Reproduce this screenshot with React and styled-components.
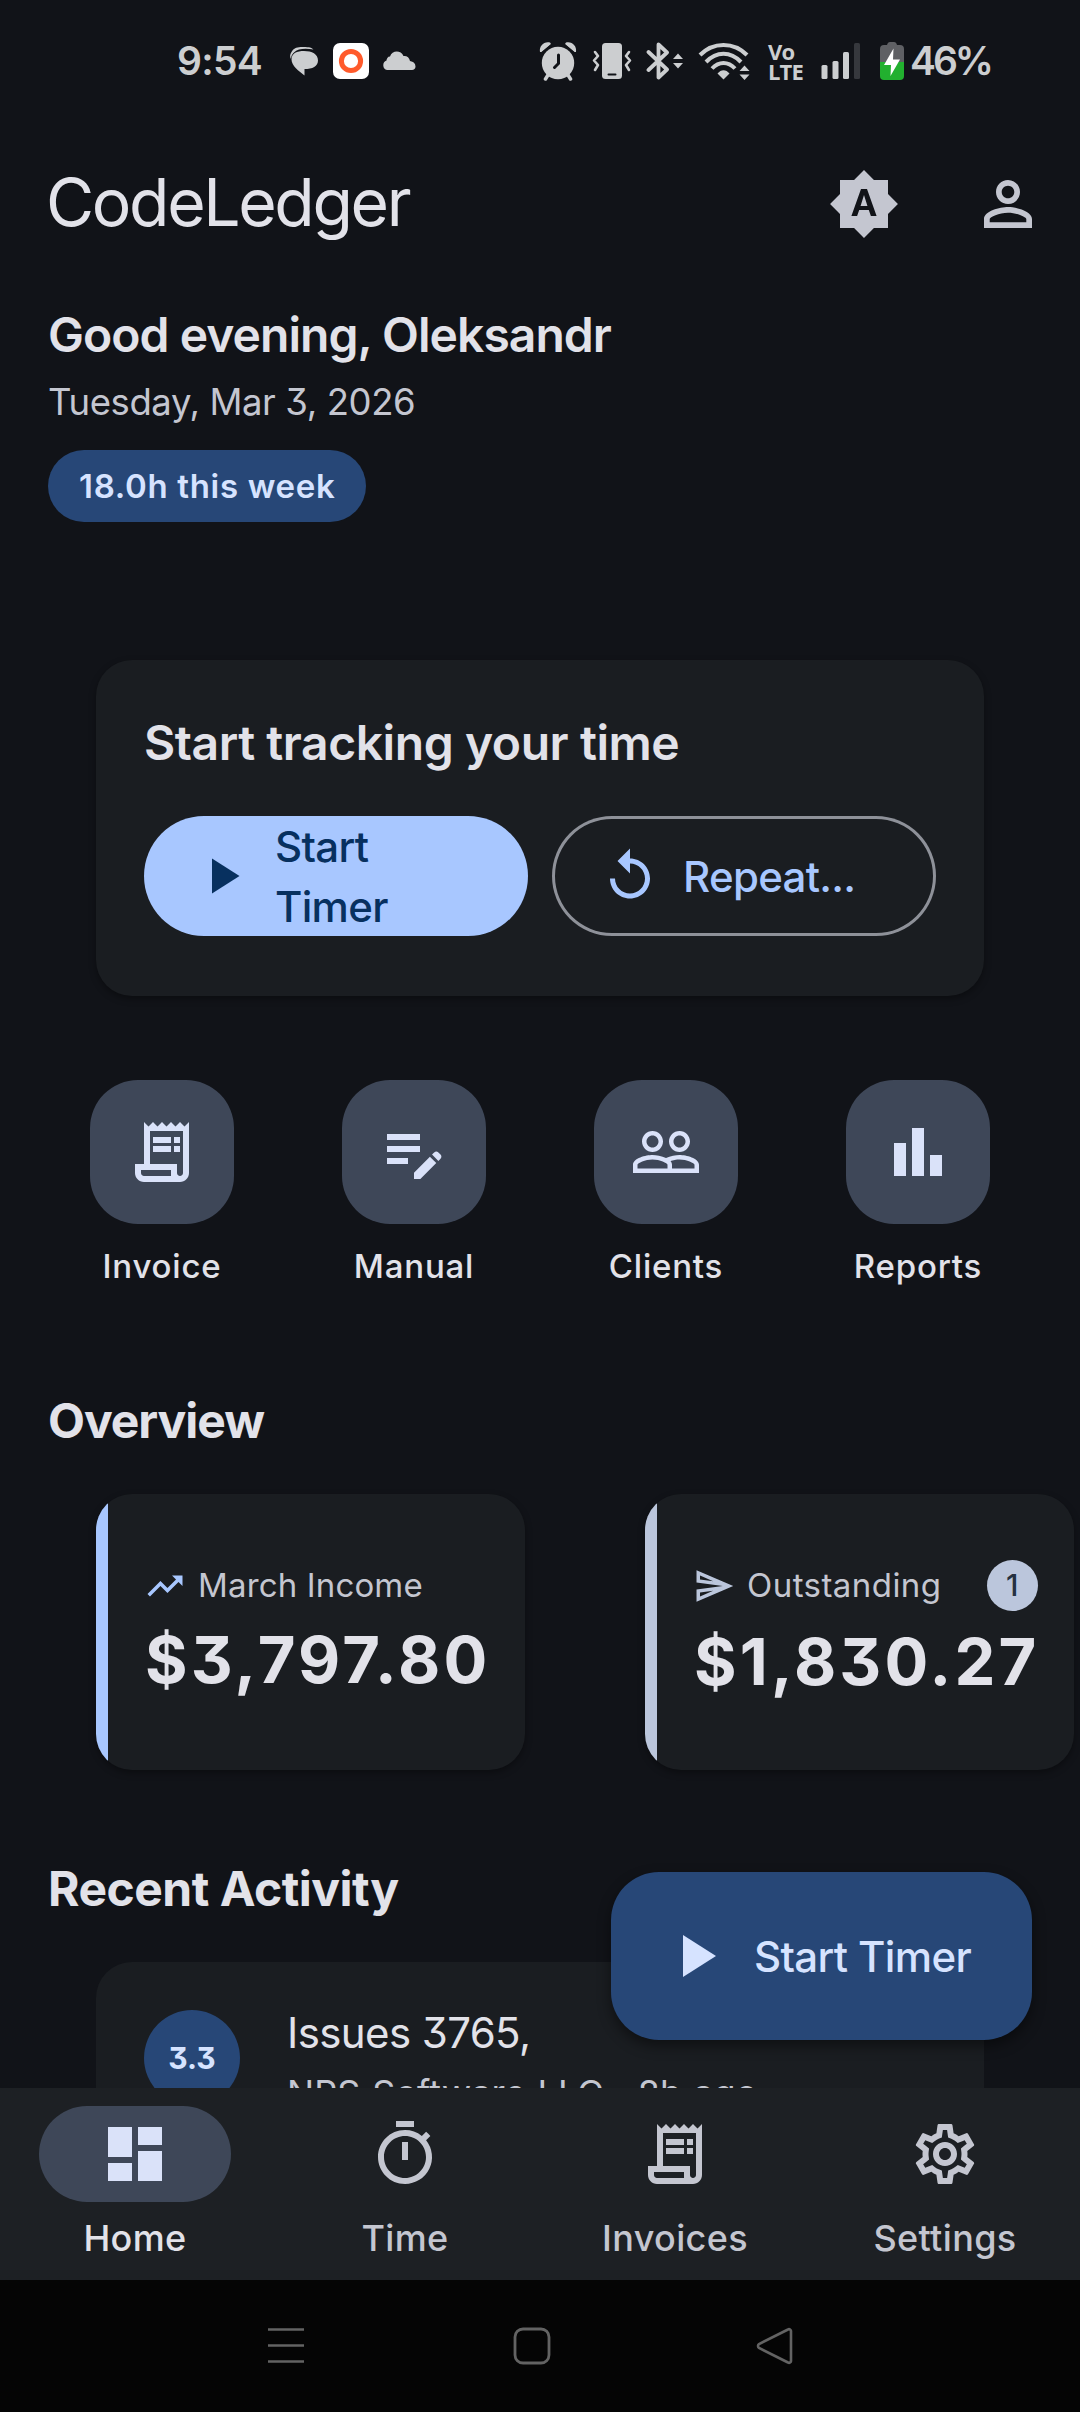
import React from 'react';
import styled, { createGlobalStyle } from 'styled-components';
import {
  MdBrightnessAuto,
  MdOutlineReceiptLong,
  MdEditNote,
  MdOutlineTimer,
  MdOutlineSettings,
} from 'react-icons/md';

const GlobalStyle = createGlobalStyle`
  * {
    box-sizing: border-box;
  }

  body {
    margin: 0;
    background: #111318;
    color: #e2e2e9;
    font-family: Inter, Roboto, sans-serif;
    font-feature-settings: 'cv09' 1;
  }

  svg {
    display: block;
    flex: none;
  }
`;

const Screen = styled.div`
  position: relative;
  display: flex;
  flex-direction: column;
  width: 1080px;
  height: 2412px;
  overflow: hidden;
`;

const Content = styled.main`
  flex: 1;
  min-height: 0;
  overflow: hidden;
`;

/* Status bar */

const StatusBar = styled.header`
  display: flex;
  align-items: center;
  justify-content: space-between;
  height: 122px;
  padding: 0 89px 0 177px;
  color: #ccced0;
`;

const StatusGroup = styled.div`
  display: flex;
  align-items: center;
`;

const StatusText = styled.span`
  margin-left: ${({ $gap }) => $gap || 0}px;
  font-size: 39px;
  font-weight: 600;
  line-height: 48px;
  letter-spacing: ${({ $spacing }) => $spacing}px;
`;

const StatusIcon = styled.svg`
  margin-left: ${({ $gap }) => $gap}px;
`;

const VoLte = styled.span`
  width: 36px;
  margin: 0 -3px 0 16px;
  font-family: 'Open Sans', 'Noto Sans', sans-serif;
  font-size: 22px;
  font-weight: 700;
  line-height: 20px;
  letter-spacing: -0.8px;
`;

/* App bar */

const AppBar = styled.div`
  display: flex;
  align-items: center;
  justify-content: space-between;
  height: 164px;
  padding: 0 36px 0 46px;
`;

const Title = styled.h1`
  margin: 0;
  font-size: 66px;
  font-weight: 400;
  line-height: 84px;
  letter-spacing: -2.35px;
  padding-bottom: 4px;
`;

const AppBarActions = styled.div`
  display: flex;
  gap: 72px;
  color: #c4c6d0;
`;

/* Greeting */

const Greeting = styled.section`
  display: flex;
  flex-direction: column;
  align-items: flex-start;
  padding: 12px 48px 0;
`;

const Hello = styled.h2`
  margin: 0;
  font-size: 48px;
  font-weight: 600;
  line-height: 73px;
  letter-spacing: -0.95px;
`;

const Today = styled.p`
  margin: 4px 0 21px;
  color: #c4c6d0;
  font-size: 36.5px;
  font-weight: 400;
  line-height: 54px;
  letter-spacing: -0.4px;
`;

const Chip = styled.span`
  height: 72px;
  padding: 0 31px;
  border-radius: 36px;
  background: #274777;
  color: #d6e3ff;
  font-size: 33px;
  font-weight: 600;
  line-height: 73px;
  letter-spacing: 0.68px;
`;

/* Timer card */

const TimerCard = styled.section`
  height: 336px;
  margin: 138px 96px 0;
  padding: 48px;
  border-radius: 36px;
  background: #1a1d21;
  box-shadow: 0 3px 7px rgba(0, 0, 0, 0.35);
`;

const CardTitle = styled.h3`
  margin: 0 0 39px;
  font-size: 48px;
  font-weight: 600;
  line-height: 69px;
  letter-spacing: -0.43px;
`;

const ButtonRow = styled.div`
  display: flex;
  gap: 24px;
`;

const Button = styled.button`
  display: flex;
  flex: 1 1 0;
  align-items: center;
  gap: 23px;
  min-width: 0;
  height: 120px;
  padding: 0 48px;
  border: 0;
  border-radius: 60px;
  background: ${({ $outlined }) => ($outlined ? 'transparent' : '#a8c7ff')};
  box-shadow: ${({ $outlined }) => ($outlined ? 'inset 0 0 0 3px #8e9199' : 'none')};
  color: ${({ $outlined }) => ($outlined ? '#a8c7ff' : '#07305f')};
  font: 500 42px/60px Inter, sans-serif;
  letter-spacing: -0.7px;
  text-align: left;
`;

const ButtonLabel = styled.span`
  width: ${({ $width }) => $width || 'auto'};
  padding-top: 2px;
`;

/* Shortcuts */

const Shortcuts = styled.nav`
  display: grid;
  grid-template-columns: repeat(4, 1fr);
  padding: 84px 36px 0;
`;

const Shortcut = styled.div`
  display: flex;
  flex-direction: column;
  align-items: center;
  font-size: 33px;
  font-weight: 500;
  line-height: 49px;
  letter-spacing: 0.8px;
`;

const ShortcutTile = styled.div`
  display: flex;
  align-items: center;
  justify-content: center;
  width: 144px;
  height: 144px;
  margin-bottom: 18px;
  border-radius: 48px;
  background: #3e4758;
  color: #dae2f9;
`;

/* Overview */

const SectionTitle = styled.h2`
  margin: ${({ $top }) => $top}px 0 0;
  padding-left: 48px;
  font-size: 48px;
  font-weight: 700;
  line-height: 72px;
  letter-spacing: ${({ $spacing }) => $spacing}px;
`;

const StatList = styled.div`
  display: flex;
  gap: 120px;
  margin-top: ${({ $top }) => $top}px;
  padding-left: 96px;
`;

const StatCard = styled.article`
  display: flex;
  flex: none;
  width: 429px;
  height: 276px;
  overflow: hidden;
  border-radius: 36px;
  background: #1a1d21;
  box-shadow: 0 3px 7px rgba(0, 0, 0, 0.35);
`;

const Accent = styled.div`
  width: 12px;
  background: ${({ $color }) => $color};
`;

const StatBody = styled.div`
  flex: 1;
  min-width: 0;
  padding: 66px 36px 0;
`;

const StatHead = styled.div`
  display: flex;
  align-items: center;
  height: 51px;
  color: #c4c6d0;
  font-size: 33px;
  line-height: 51px;
  letter-spacing: ${({ $spacing }) => $spacing}px;

  svg {
    margin-right: 12px;
    color: ${({ $color }) => $color};
  }
`;

const StatBadge = styled.span`
  width: 51px;
  height: 51px;
  margin-left: auto;
  border-radius: 50%;
  background: #bbc6dc;
  color: #253140;
  font-size: 30px;
  font-weight: 500;
  line-height: 51px;
  text-align: center;
`;

const Amount = styled.div`
  margin: ${({ $top }) => $top}px 0 0 1px;
  font-size: 65px;
  font-weight: 700;
  line-height: 80px;
  letter-spacing: 3.15px;
  white-space: nowrap;
`;

/* Recent activity */

const ActivityCard = styled.section`
  display: flex;
  gap: 47px;
  height: 300px;
  margin: 37px 96px 0;
  padding: 48px;
  border-radius: 36px;
  background: #1a1d21;
`;

const Hours = styled.div`
  width: 96px;
  height: 96px;
  border-radius: 50%;
  background: #274777;
  color: #d6e3ff;
  font-size: 30px;
  font-weight: 700;
  line-height: 96px;
  text-align: center;
`;

const ActivityName = styled.div`
  margin-top: -7px;
  font-size: 42px;
  line-height: 60px;
  letter-spacing: -0.6px;
`;

const ActivityMeta = styled.div`
  margin-top: 3px;
  color: #c4c6d0;
  font-size: 36px;
  line-height: 54px;
  letter-spacing: 0.1px;
  word-spacing: 1.5px;
  white-space: nowrap;
`;

const Fab = styled.button`
  position: absolute;
  right: 48px;
  bottom: 372px;
  display: flex;
  align-items: center;
  gap: 23px;
  width: 421px;
  height: 168px;
  padding: 0 0 0 48px;
  border: 0;
  border-radius: 48px;
  background: #274777;
  box-shadow: 0 6px 14px rgba(0, 0, 0, 0.45);
  color: #d6e3ff;
  font: 500 42px/60px Inter, sans-serif;
  letter-spacing: -0.65px;
  white-space: nowrap;
`;

/* Bottom bars */

const TabBar = styled.nav`
  display: grid;
  grid-template-columns: repeat(4, 1fr);
  height: 192px;
  padding-top: 18px;
  background: #1d2024;
`;

const Tab = styled.div`
  display: flex;
  flex-direction: column;
  align-items: center;
  color: ${({ $active }) => ($active ? '#e2e2e9' : '#c4c6d0')};
  font-size: 36px;
  font-weight: 500;
  line-height: 54px;
  letter-spacing: 0.35px;
`;

const TabIcon = styled.div`
  display: flex;
  align-items: center;
  justify-content: center;
  width: 192px;
  height: 96px;
  margin-bottom: 9px;
  border-radius: 48px;
  background: ${({ $active }) => ($active ? '#3e4758' : 'transparent')};
  color: ${({ $active }) => ($active ? '#dae2f9' : '#c4c6d0')};
`;

const SystemBar = styled.footer`
  display: flex;
  align-items: center;
  gap: 203px;
  height: 132px;
  padding-left: 265px;
  background: #050505;
  color: #636363;
`;

const Icon = ({ d, size = 72 }) => (
  <svg width={size} height={size} viewBox="0 0 24 24" fill="currentColor">
    <path d={d} />
  </svg>
);

const PLAY = 'M8 5v14l11-7z';
const REPLAY =
  'M12 5V1L7 6l5 5V7c3.31 0 6 2.69 6 6s-2.69 6-6 6-6-2.69-6-6H4c0 4.42 3.58 8 8 8s8-3.58 8-8-3.58-8-8-8z';
const PERSON =
  'M12 5.9c1.16 0 2.1.94 2.1 2.1s-.94 2.1-2.1 2.1S9.9 9.16 9.9 8s.94-2.1 2.1-2.1m0 9c2.97 0 6.1 1.46 6.1 2.1v1.1H5.9V17c0-.64 3.13-2.1 6.1-2.1M12 4C9.79 4 8 5.79 8 8s1.79 4 4 4 4-1.79 4-4-1.79-4-4-4zm0 9c-2.67 0-8 1.34-8 4v3h16v-3c0-2.66-5.33-4-8-4z';
const PEOPLE =
  'M16.5 13c-1.2 0-3.07.34-4.5 1-1.43-.67-3.3-1-4.5-1C5.33 13 1 14.08 1 16.25V19h22v-2.75c0-2.17-4.33-3.25-6.5-3.25zm-4 4.5h-10v-1.25c0-.54 2.56-1.75 5-1.75s5 1.21 5 1.75v1.25zm9 0H14v-1.25c0-.46-.2-.86-.52-1.22.88-.3 1.96-.53 3.02-.53 2.44 0 5 1.21 5 1.75v1.25zM7.5 12c1.93 0 3.5-1.57 3.5-3.5S9.43 5 7.5 5 4 6.57 4 8.5 5.57 12 7.5 12zm0-5.5c1.1 0 2 .9 2 2s-.9 2-2 2-2-.9-2-2 .9-2 2-2zm9 5.5c1.93 0 3.5-1.57 3.5-3.5S18.43 5 16.5 5 13 6.57 13 8.5s1.57 3.5 3.5 3.5zm0-5.5c1.1 0 2 .9 2 2s-.9 2-2 2-2-.9-2-2 .9-2 2-2z';
const BARS = 'M4 9h4v11H4zM16 13h4v7h-4zM10 4h4v16h-4z';
const TREND = 'M16 6l2.29 2.29-4.88 4.88-4-4L2 16.59 3.41 18l6-6 4 4 6.3-6.29L22 12V6z';
const SEND =
  'M4.01 6.03l7.51 3.22-7.52-1 .01-2.22m7.5 8.72L4 17.97v-2.22l7.51-1M2.01 3L2 10l15 2-15 2 .01 7L23 12 2.01 3z';
const DASHBOARD = 'M3 13h8V3H3v10zm0 8h8v-6H3v6zm10 0h8V11h-8v10zm0-18v6h8V3h-8z';

const shortcuts = [
  { label: 'Invoice', icon: <MdOutlineReceiptLong size={72} /> },
  { label: 'Manual', icon: <MdEditNote size={72} /> },
  { label: 'Clients', icon: <Icon d={PEOPLE} /> },
  { label: 'Reports', icon: <Icon d={BARS} /> },
];

const tabs = [
  { label: 'Home', icon: <Icon d={DASHBOARD} />, active: true },
  { label: 'Time', icon: <MdOutlineTimer size={72} /> },
  { label: 'Invoices', icon: <MdOutlineReceiptLong size={72} /> },
  { label: 'Settings', icon: <MdOutlineSettings size={72} /> },
];

const StatusIcons = () => (
  <StatusGroup>
    {/* alarm */}
    <StatusIcon $gap={0} width="38" height="40" viewBox="0 0 38 40" fill="currentColor">
      <circle cx="19" cy="22" r="16.2" />
      <path d="M1 11C0 5 5 0 11 1.5L12 3 2.5 11zM37 11C38 5 33 0 27 1.5L26 3l9.5 8z" />
      <path d="M9 34l-2.5 4M29 34l2.5 4" stroke="currentColor" strokeWidth="3.5" strokeLinecap="round" />
      <path d="M2 12.5L13 3.500M36 12.500L25 3.500" stroke="#111318" strokeWidth="1.5" />
      <path d="M19.5 14v8.5l-4 4" fill="none" stroke="#111318" strokeWidth="3" strokeLinecap="round" />
    </StatusIcon>
    {/* vibrate */}
    <StatusIcon $gap={15} width="40" height="38" viewBox="0 0 40 38" fill="currentColor">
      <rect x="10" y="1" width="20" height="36" rx="3.5" />
      <path d="M16.5 32.5h7" stroke="#111318" strokeWidth="2" strokeLinecap="round" />
      <path
        d="M3 10l3 4-4 4.5 4 4.5-3 5M37 10l-3 4 4 4.5-4 4.5 3 5"
        fill="none"
        stroke="currentColor"
        strokeWidth="2.6"
        strokeLinejoin="round"
        strokeLinecap="round"
      />
    </StatusIcon>
    {/* bluetooth */}
    <StatusIcon $gap={14} width="38" height="40" viewBox="0 0 38 40" fill="currentColor">
      <path
        d="M2.5 11L21 28.5l-8.5 8V3.5l8.5 8L2.5 29"
        fill="none"
        stroke="currentColor"
        strokeWidth="3.8"
        strokeLinejoin="round"
        strokeLinecap="round"
      />
      <path d="M27 18l5-5.5 5 5.5zM27 22l5 5.5 5-5.5z" />
    </StatusIcon>
    {/* wifi */}
    <StatusIcon $gap={14} width="54" height="38" viewBox="0 0 54 38" fill="currentColor">
      <g fill="none" stroke="currentColor" strokeWidth="4">
        <path d="M2 13C15-.5 36-.5 49 13" />
        <path d="M8 20C18.5 9 32.5 9 43 20" />
        <path d="M14 26.5c7-7.5 16-7.5 23 0" />
      </g>
      <path d="M19.5 31.5c3.5-4.5 8.5-4.5 12 0l-6 6z" />
      <path d="M41.5 29l5-5.5 5 5.5zM41.5 32.5l5 5.5 5-5.5z" />
    </StatusIcon>
    <VoLte>Vo LTE</VoLte>
    {/* signal */}
    <StatusIcon $gap={20} width="40" height="38" viewBox="0 0 40 38" fill="currentColor">
      <rect x="0.5" y="23" width="6" height="14" rx="1.5" />
      <rect x="11.5" y="19" width="6" height="18" rx="1.5" />
      <rect x="22" y="10" width="6" height="27" rx="1.5" />
      <rect x="33" y="1" width="6" height="36" rx="1.5" opacity="0.2" />
    </StatusIcon>
    {/* battery */}
    <StatusIcon $gap={18} width="26" height="40" viewBox="0 0 26 40">
      <path
        d="M5 4h3c.5-2 1.5-3 3-3h4c1.5 0 2.5 1 3 3h3a4 4 0 0 1 4 4v13H1V8a4 4 0 0 1 4-4z"
        fill="#5f6064"
      />
      <path d="M1 21h24v14a4 4 0 0 1-4 4H5a4 4 0 0 1-4-4z" fill="#22b02f" />
      <path d="M14.5 7.5L5 24h7l-.5 11L21 18.5h-7z" fill="#fff" />
    </StatusIcon>
    <StatusText $gap={5} $spacing={-3}>46%</StatusText>
  </StatusGroup>
);

const App = () => (
  <>
    <GlobalStyle />
    <Screen>
      <Content>
        <StatusBar>
          <StatusGroup>
            <StatusText $spacing={-0.7}>9:54</StatusText>
            {/* messages */}
            <StatusIcon $gap={27} width="30" height="30" viewBox="0 0 30 30" fill="currentColor">
              <path d="M2.5 6C5 1.5 9 1 13 1c5 0 9 0 11.5 2.5C18 2.5 9 2 5 6.500 2.500 9 2.500 10 2 13 .5 11 1 8 2.500 6z" />
              <path d="M15 5c8 0 14 3 14 9.500 0 6-5.500 8.500-13.500 8.500v6.500C10 25 2.500 20 2.500 13.500 2.500 7 8 5 15 5z" />
            </StatusIcon>
            <StatusIcon $gap={14} width="36" height="36" viewBox="0 0 36 36">
              <rect width="36" height="36" rx="7" fill="#fff" />
              <circle cx="18" cy="18" r="9.6" fill="none" stroke="#ff5a2b" strokeWidth="5" />
            </StatusIcon>
            {/* cloud */}
            <StatusIcon $gap={13} width="34" height="20" viewBox="0 0 34 20" fill="currentColor">
              <path d="M5 19a5 5 0 0 1-.5-9.500C5 6 7 5.500 8 5.500 10-1 19-1 21.500 5c3-.5 6 1.500 6.500 5 3.500.5 5.500 2.500 5.500 5.500 0 2-1.500 3.500-3.500 3.500z" />
            </StatusIcon>
          </StatusGroup>
          <StatusIcons />
        </StatusBar>

        <AppBar>
          <Title>CodeLedger</Title>
          <AppBarActions>
            <MdBrightnessAuto size={72} />
            <Icon d={PERSON} />
          </AppBarActions>
        </AppBar>

        <Greeting>
          <Hello>Good evening, Oleksandr</Hello>
          <Today>Tuesday, Mar 3, 2026</Today>
          <Chip>18.0h this week</Chip>
        </Greeting>

        <TimerCard>
          <CardTitle>Start tracking your time</CardTitle>
          <ButtonRow>
            <Button>
              <Icon d={PLAY} size={60} />
              <ButtonLabel $width="130px">Start Timer</ButtonLabel>
            </Button>
            <Button $outlined>
              <Icon d={REPLAY} size={60} />
              <ButtonLabel>Repeat...</ButtonLabel>
            </Button>
          </ButtonRow>
        </TimerCard>

        <Shortcuts>
          {shortcuts.map(({ label, icon }) => (
            <Shortcut key={label}>
              <ShortcutTile>{icon}</ShortcutTile>
              {label}
            </Shortcut>
          ))}
        </Shortcuts>

        <SectionTitle $top={94} $spacing={-1.05}>Overview</SectionTitle>
        <StatList $top={37}>
          <StatCard>
            <Accent $color="#a8c7ff" />
            <StatBody>
              <StatHead $color="#a8c7ff" $spacing={0.15}>
                <Icon d={TREND} size={42} />
                March Income
              </StatHead>
              <Amount $top={9}>$3,797.80</Amount>
            </StatBody>
          </StatCard>
          <StatCard>
            <Accent $color="#bbc6dc" />
            <StatBody>
              <StatHead $color="#bbc6dc" $spacing={0.45}>
                <Icon d={SEND} size={42} />
                Outstanding
                <StatBadge>1</StatBadge>
              </StatHead>
              <Amount $top={11}>$1,830.27</Amount>
            </StatBody>
          </StatCard>
        </StatList>

        <SectionTitle $top={83} $spacing={-0.5}>Recent Activity</SectionTitle>
        <ActivityCard>
          <Hours>3.3</Hours>
          <div>
            <ActivityName>Issues 3765,</ActivityName>
            <ActivityMeta>NPS Software LLC · 8h ago</ActivityMeta>
          </div>
        </ActivityCard>
      </Content>

      <Fab>
        <Icon d={PLAY} />
        <ButtonLabel>Start Timer</ButtonLabel>
      </Fab>

      <TabBar>
        {tabs.map(({ label, icon, active }) => (
          <Tab key={label} $active={active}>
            <TabIcon $active={active}>{icon}</TabIcon>
            {label}
          </Tab>
        ))}
      </TabBar>

      <SystemBar>
        <svg width="42" height="42" viewBox="0 0 42 42" stroke="currentColor" strokeWidth="2.6">
          <path d="M3 4.500h36M3 20.500h36M3 36.500h36" />
        </svg>
        <svg width="42" height="42" viewBox="0 0 42 42" fill="none" stroke="currentColor" strokeWidth="2.8">
          <rect x="5" y="4" width="34" height="34" rx="8" />
        </svg>
        <svg width="42" height="42" viewBox="0 0 42 42" fill="none" stroke="currentColor" strokeWidth="2.6">
          <path d="M33 4.500L4 19a2.500 2.500 0 0 0 0 4L33 37.500a2 2 0 0 0 3-2v-29a2 2 0 0 0-3-2z" />
        </svg>
      </SystemBar>
    </Screen>
  </>
);

export default App;
